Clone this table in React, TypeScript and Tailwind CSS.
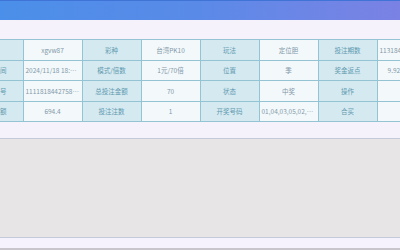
import React from "react";

const rows: { l: string; v: string }[][] = [
  [
    { l: "账号", v: "xgvw87" },
    { l: "彩种", v: "台湾PK10" },
    { l: "玩法", v: "定位胆" },
    { l: "投注期数", v: "113184427588618" },
  ],
  [
    { l: "投注时间", v: "2024/11/18 18:44:27" },
    { l: "模式/倍数", v: "1元/70倍" },
    { l: "位置", v: "季" },
    { l: "奖金返点", v: "9.920000000" },
  ],
  [
    { l: "注单编号", v: "111181844275886180" },
    { l: "总投注金额", v: "70" },
    { l: "状态", v: "中奖" },
    { l: "操作", v: "" },
  ],
  [
    { l: "中奖金额", v: "694.4" },
    { l: "投注注数", v: "1" },
    { l: "开奖号码", v: "01,04,03,05,02,09,06,07,08,10" },
    { l: "合买", v: "" },
  ],
];

export default function App() {
  return (
    <div
      className="w-[400px] h-[250px] overflow-hidden bg-[#f5f2fc] flex flex-col"
      style={{ fontFamily: '"Noto Sans CJK SC", "Noto Sans", sans-serif' }}
    >
      <div className="h-[20px] shrink-0 border-t border-[#3f74d6] bg-gradient-to-r from-[#4a8fe9] via-[#5a8ae8] to-[#7a82e4]" />
      <div className="pt-[19px] shrink-0 overflow-hidden">
        <table className="ml-[-36.5px] table-fixed border-collapse w-[472px] text-[6.5px] leading-none">
          <tbody>
            {rows.map((r, i) => (
              <tr key={i} className="h-[20.5px]">
                {r.map((c, j) => (
                  <React.Fragment key={j}>
                    <td className="w-[59px] border border-[#94c4d3] bg-[#d5e9f1] text-[#6099ae] text-center truncate px-[1px]">
                      {c.l}
                    </td>
                    <td className="w-[59px] border border-[#94c4d3] bg-[#f3f8fb] text-[#8299a8] text-center truncate px-[2px] align-middle">
                      {c.v}
                    </td>
                  </React.Fragment>
                ))}
              </tr>
            ))}
          </tbody>
        </table>
      </div>
      <div className="mt-[16px] h-[100px] shrink-0 bg-[#e8e5e7] border-t border-b border-[#c3cbdb]" />
      <div className="flex-1 bg-[#f6f2fd]" />
      <div className="h-[2px] bg-[#c9c5cc]" />
    </div>
  );
}
